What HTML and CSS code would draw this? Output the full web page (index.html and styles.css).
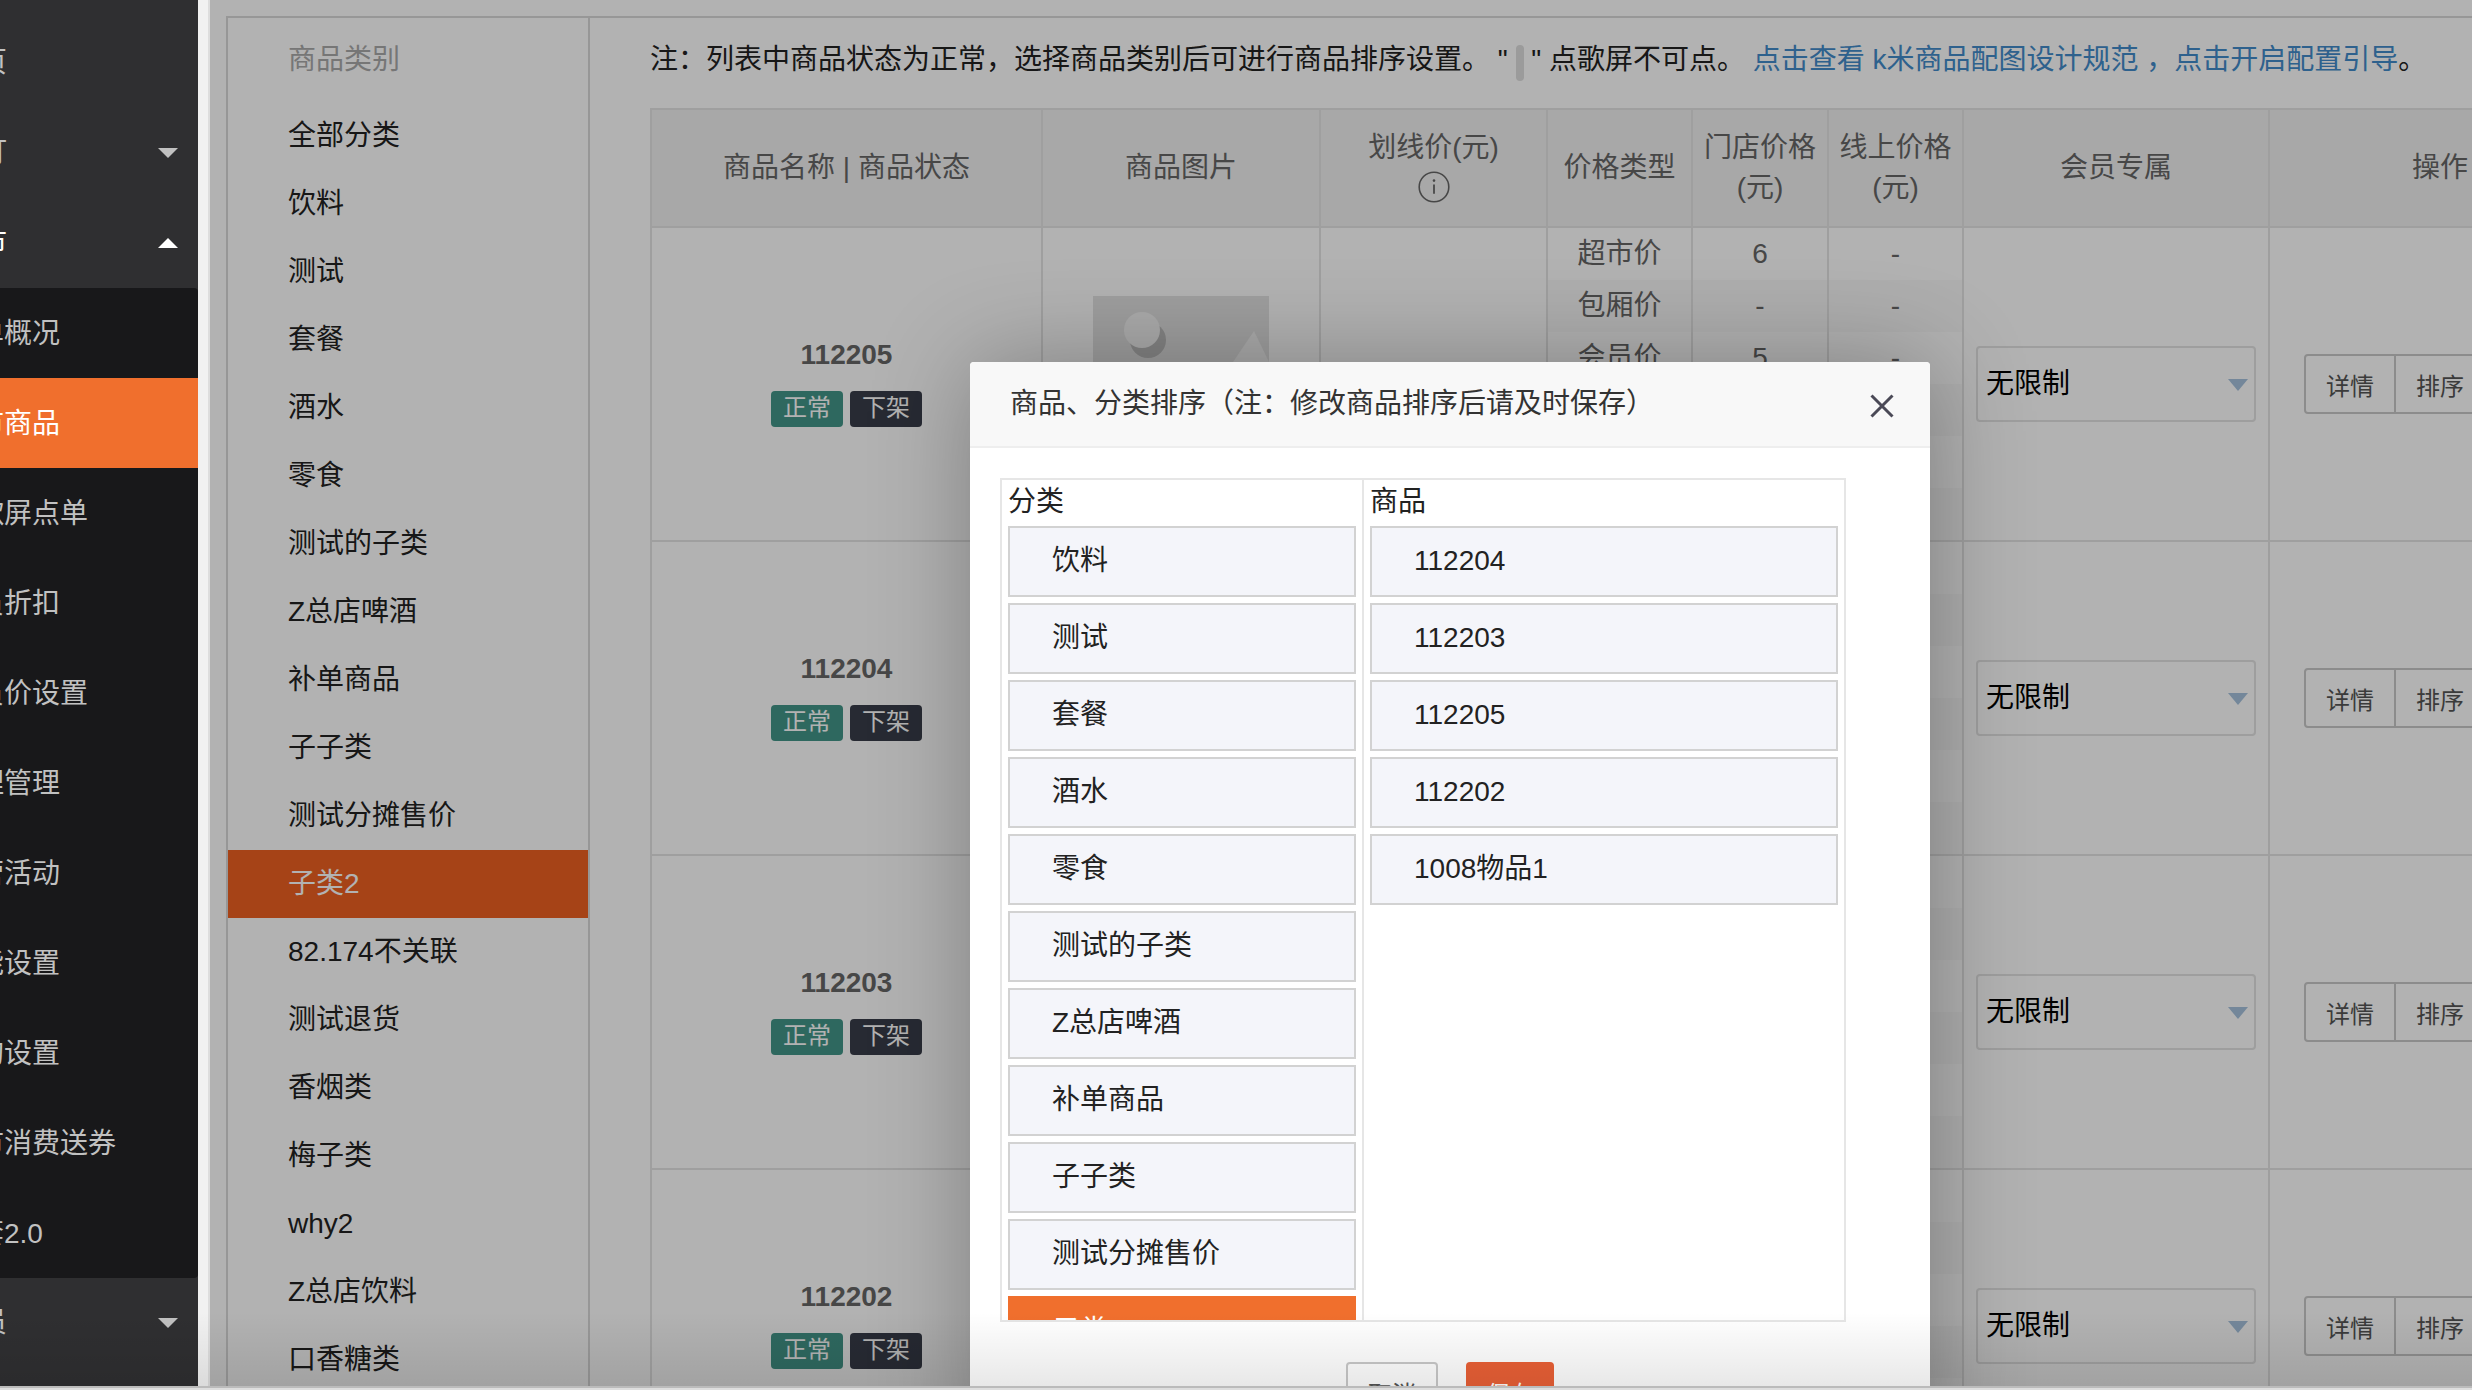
FILE: index.html
```html
<!DOCTYPE html>
<html lang="zh-CN">
<head>
<meta charset="utf-8">
<title>超市商品</title>
<link rel="stylesheet" href="styles.css">
</head>
<body>
<div class="app">
  <aside class="sidebar">
    <nav class="side-nav">
      <a class="side-item" href="#">首页</a>
      <a class="side-item" href="#">预订<i class="caret caret-down"></i></a>
      <a class="side-item open" href="#">超市<i class="caret caret-up"></i></a>
      <div class="side-sub">
        <a href="#">点单概况</a>
        <a class="active" href="#">超市商品</a>
        <a href="#">点歌屏点单</a>
        <a href="#">会员折扣</a>
        <a href="#">会员价设置</a>
        <a href="#">经理管理</a>
        <a href="#">运营活动</a>
        <a href="#">功能设置</a>
        <a href="#">自购设置</a>
        <a href="#">超市消费送券</a>
        <a href="#">酒套2.0</a>
      </div>
      <a class="side-item" href="#">会员<i class="caret caret-down"></i></a>
    </nav>
  </aside>

  <main class="main">
    <div class="panel">
      <nav class="cats">
        <h2 class="cats-title">商品类别</h2>
        <a href="#">全部分类</a>
        <a href="#">饮料</a>
        <a href="#">测试</a>
        <a href="#">套餐</a>
        <a href="#">酒水</a>
        <a href="#">零食</a>
        <a href="#">测试的子类</a>
        <a href="#">Z总店啤酒</a>
        <a href="#">补单商品</a>
        <a href="#">子子类</a>
        <a href="#">测试分摊售价</a>
        <a class="active" href="#">子类2</a>
        <a href="#">82.174不关联</a>
        <a href="#">测试退货</a>
        <a href="#">香烟类</a>
        <a href="#">梅子类</a>
        <a href="#">why2</a>
        <a href="#">Z总店饮料</a>
        <a href="#">口香糖类</a>
      </nav>

      <section class="content">
        <p class="note">注：列表中商品状态为正常，选择商品类别后可进行商品排序设置。 " <i class="swatch"></i> " 点歌屏不可点。 <a href="#">点击查看 k米商品配图设计规范</a><a href="#"> ，点击开启配置引导</a>。</p>
        <table class="goods">
          <colgroup>
            <col class="c-name"><col class="c-pic"><col class="c-line"><col class="c-type"><col class="c-shop"><col class="c-online"><col class="c-member"><col class="c-ops">
          </colgroup>
          <thead>
            <tr>
              <th>商品名称 | 商品状态</th>
              <th>商品图片</th>
              <th>划线价(元)<br><svg class="info" viewBox="0 0 32 32"><circle cx="16" cy="16" r="14.8" fill="none" stroke="#666" stroke-width="1.6"/><circle cx="16" cy="9.6" r="1.3" fill="#666"/><path d="M16 13.4v9.4" stroke="#666" stroke-width="1.8"/></svg></th>
              <th>价格类型</th>
              <th>门店价格(元)</th>
              <th>线上价格(元)</th>
              <th>会员专属</th>
              <th>操作</th>
            </tr>
          </thead>
          <tbody id="rows"></tbody>
        </table>
      </section>
    </div>

    <div class="shade"></div>

    <div class="dialog" role="dialog" aria-labelledby="dialog-title">
      <header class="dialog-head">
        <h1 id="dialog-title">商品、分类排序（注：修改商品排序后请及时保存）</h1>
        <button class="close" type="button" aria-label="关闭"><svg viewBox="0 0 24 24"><path d="M1.500 1.500l21 21M22.500 1.500l-21 21" stroke="#4a4956" stroke-width="3" fill="none"/></svg></button>
      </header>
      <div class="sorter">
        <div class="sort-col sort-cats">
          <h3>分类</h3>
          <ul>
            <li>饮料</li>
            <li>测试</li>
            <li>套餐</li>
            <li>酒水</li>
            <li>零食</li>
            <li>测试的子类</li>
            <li>Z总店啤酒</li>
            <li>补单商品</li>
            <li>子子类</li>
            <li>测试分摊售价</li>
            <li class="active">子类2</li>
          </ul>
        </div>
        <div class="sort-col sort-goods">
          <h3>商品</h3>
          <ul>
            <li>112204</li>
            <li>112203</li>
            <li>112205</li>
            <li>112202</li>
            <li>1008物品1</li>
          </ul>
        </div>
      </div>
      <footer class="dialog-foot">
        <button class="btn-cancel" type="button">取消</button>
        <button class="btn-save" type="button">保存</button>
      </footer>
    </div>
  </main>
  <div class="bottom-fade"></div>
</div>
<script src="rows.js"></script>
</body>
</html>
```
FILE: rows.js
```javascript
const prices = [
  ['超市价', '6', '-'],
  ['包厢价', '-', '-'],
  ['会员价', '5', '-'],
  ['活动价', '-', '-'],
  ['员工价', '-', '-'],
  ['成本价', '-', '-']
];

const lines = (index) =>
  '<ul class="lines">' + prices.map((p) => `<li>${p[index]}</li>`).join('') + '</ul>';

const picture = `
  <svg class="pic" viewBox="0 0 176 176">
    <rect width="176" height="176" fill="#e3e3e3"/>
    <circle cx="55" cy="44" r="18" fill="#bcbcbc"/>
    <circle cx="49" cy="34" r="18" fill="#f4f4f4"/>
    <path d="M161 35L176 66V140H90z" fill="#f4f4f4"/>
  </svg>`;

document.getElementById('rows').innerHTML = ['112205', '112204', '112203', '112202'].map((code) => `
  <tr>
    <td><strong class="code">${code}</strong><div class="tags"><span class="tag on">正常</span><span class="tag off">下架</span></div></td>
    <td>${picture}</td>
    <td></td>
    <td class="stack">${lines(0)}</td>
    <td class="stack">${lines(1)}</td>
    <td class="stack">${lines(2)}</td>
    <td class="member"><div class="select"><select aria-label="${code} 会员专属"><option>无限制</option></select></div></td>
    <td class="ops"><div class="group"><button type="button">详情</button><button type="button">排序</button></div></td>
  </tr>`).join('');
```
FILE: styles.css
```css
* { box-sizing: border-box; }

body {
  margin: 0;
  background: #fff;
  color: #222;
  font: 28px/40px "Liberation Sans", "Noto Sans CJK SC", sans-serif;
}

a { color: inherit; text-decoration: none; }
h1, h2, h3, p, ul { margin: 0; padding: 0; font-size: inherit; font-weight: 400; }
ul { list-style: none; }
button, select { font-family: inherit; cursor: pointer; }

.app {
  position: relative;
  display: flex;
  height: 100vh;
  overflow: hidden;
  border-bottom: 2px solid #dedede;
}

/* left navigation, scrolled partly out of view */
.sidebar {
  flex: 0 0 198px;
  overflow: hidden;
  background: #2f2f31;
  color: #c1c1c1;
}
.side-nav { margin: 18px 0 0 -92px; }
.side-item,
.side-sub a {
  display: flex;
  align-items: center;
  justify-content: space-between;
  height: 90px;
  padding: 2px 20px 0 40px;
}
.side-item { padding: 0 20px 0 43px; }
.side-item.open { color: #fff; }
.side-sub {
  overflow: hidden;
  border-radius: 4px;
  background: #18181a;
}
.side-sub .active { background: #f06f2d; color: #fff; }
.caret { border: 10px solid transparent; }
.caret-down { border-top: 10px solid #c1c1c1; border-bottom: 0; }
.caret-up { border-bottom: 10px solid #fff; border-top: 0; }

.main {
  position: relative;
  flex: 1;
  min-width: 0;
  margin-left: 10px;
  padding: 16px 0 0 18px;
  overflow: hidden;
  border-left: 2px solid #ddd;
  background: #fff;
  box-shadow: -10px 0 #f1f1f1;
}
.panel {
  display: flex;
  height: 100%;
  border: 2px solid #d9d9d9;
  border-width: 2px 0 0 2px;
  margin-left: -2px;
}

.cats {
  flex: 0 0 362px;
  overflow: hidden;
  border-right: 2px solid #d9d9d9;
}
.cats-title { height: 84px; padding: 22px 0 0 60px; color: #aaa; }
.cats a { display: block; height: 68px; padding: 14px 0 0 60px; line-height: 40px; }
.cats .active { background: #ee6122; color: #fff; }

.content { flex: 1; min-width: 0; overflow: hidden; padding-left: 60px; }
.note { height: 90px; padding-top: 22px; white-space: nowrap; }
.note a { color: #428bca; }
.swatch {
  display: inline-block;
  width: 8px;
  height: 36px;
  border-radius: 4px;
  background: #dedede;
  vertical-align: -12px;
}

.goods {
  width: 1961px;
  table-layout: fixed;
  border-collapse: collapse;
  color: #666;
  text-align: center;
}
.c-name { width: 391px; }
.c-pic { width: 278px; }
.c-line { width: 227px; }
.c-type { width: 145px; }
.c-shop { width: 136px; }
.c-online { width: 135px; }
.c-member { width: 306px; }
.c-ops { width: 342px; }
.goods th, .goods td { padding: 0; border: 2px solid #e4e4e4; vertical-align: middle; }
.goods th { height: 118px; padding: 0 10px; background: #f1f1f1; font-weight: 400; }
.goods .stack { vertical-align: top; }
.goods tr { height: 118px; }
.goods tbody tr { height: 314px; }
.info { display: inline-block; width: 32px; height: 32px; vertical-align: -6px; }
.code { display: block; line-height: 40px; }
.tags { display: flex; justify-content: center; gap: 7px; margin-top: 16px; padding-bottom: 6px; }
.tag { width: 72px; height: 36px; border-radius: 4px; color: #fff; font-size: 24px; line-height: 34px; }
.tag.on { background: #439688; }
.tag.off { background: #393d49; }
.pic { display: block; width: 176px; height: 176px; margin: 0 auto; }
.lines li { height: 52px; padding-top: 6px; }
.lines li:nth-child(even) { background: #fafafa; }

.goods .member { padding: 0 12px; }
.select { position: relative; }
.select::after {
  content: "";
  position: absolute;
  top: 33px;
  right: 8px;
  border: 10px solid transparent;
  border-top: 12px solid #a6c2dd;
  border-bottom: 0;
  pointer-events: none;
}
.select select {
  display: block;
  width: 100%;
  height: 76px;
  padding: 0 8px 2px;
  appearance: none;
  border: 2px solid #e2e2e2;
  border-radius: 4px;
  background: #fff;
  color: #000;
  font-size: 28px;
}

.goods .ops { padding-left: 34px; }
.group { display: flex; }
.group button {
  width: 92px;
  height: 60px;
  margin-right: -2px;
  padding: 0;
  border: 2px solid #c9c9c9;
  background: #fff;
  color: #555;
  font-size: 24px;
}
.group button:first-child { border-radius: 4px 0 0 4px; }

.shade { position: absolute; inset: 0; background: rgba(0, 0, 0, .3); }

/* sorting dialog floating above the page */
.dialog {
  position: absolute;
  top: 362px;
  left: 760px;
  width: 960px;
  overflow: hidden;
  border-radius: 4px;
  background: #fff;
  box-shadow: 2px 2px 100px rgba(0, 0, 0, .3);
}
.dialog-head {
  display: flex;
  align-items: center;
  justify-content: space-between;
  height: 86px;
  padding: 0 36px 0 40px;
  border-bottom: 2px solid #eee;
  background: #f8f8f8;
  color: #333;
}
.close { width: 24px; height: 24px; margin-top: 4px; padding: 0; border: 0; background: none; }
.close svg { display: block; }

.sorter {
  display: flex;
  width: 846px;
  height: 844px;
  margin: 30px 0 0 30px;
  overflow: hidden;
  border: 2px solid #e6e6e6;
}
.sort-col { padding: 0 6px; }
.sort-cats { flex: 0 0 362px; border-right: 2px solid #e6e6e6; }
.sort-goods { flex: 1; }
.sort-col h3 { height: 46px; padding-top: 2px; color: #222; }
.sort-col ul { display: grid; gap: 6px; }
.sort-col li {
  height: 71px;
  padding: 13px 0 0 42px;
  border: 2px solid #d2d2d2;
  background: #f4f5fa;
}
.sort-col .active { border-color: #f06f2d; background: #f06f2d; color: #fff; }

.dialog-foot { display: flex; justify-content: center; gap: 28px; height: 140px; padding-top: 40px; }
.dialog-foot button { height: 60px; border: 0; border-radius: 4px; font-size: 24px; }
.dialog-foot .btn-cancel { width: 92px; border: 2px solid #c9c9c9; background: #fff; color: #555; }
.dialog-foot .btn-save { width: 88px; background: #ea6036; color: #fff; }

.bottom-fade {
  position: absolute;
  right: 0;
  bottom: 0;
  left: 0;
  height: 76px;
  border-bottom: 2px solid #bbb;
  background: linear-gradient(rgba(0, 0, 0, 0), rgba(0, 0, 0, .09));
  pointer-events: none;
}
```
